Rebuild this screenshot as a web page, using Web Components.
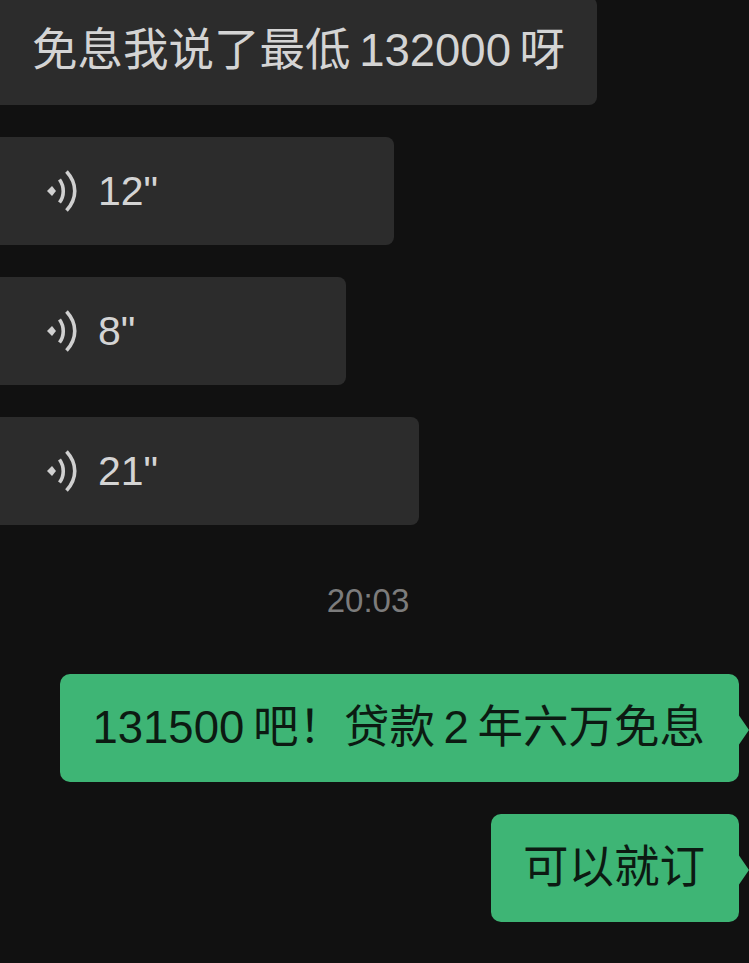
<!DOCTYPE html>
<html lang="zh">
<head>
<meta charset="utf-8">
<title>chat</title>
<style>
  html, body { margin: 0; height: 100%; overflow: hidden; background: #111111; }
  body { font-family: "Liberation Sans", "Noto Sans CJK SC", sans-serif; }
</style>
</head>
<body>
<chat-log>
  <chat-bubble style="margin-top:-3px">免息我说了最低 132000 呀</chat-bubble>
  <voice-bubble seconds="12" width="394"></voice-bubble>
  <voice-bubble seconds="8" width="346"></voice-bubble>
  <voice-bubble seconds="21" width="419"></voice-bubble>
  <chat-time>20:03</chat-time>
  <chat-bubble mine>131500 吧！贷款 2 年六万免息</chat-bubble>
  <chat-bubble mine>可以就订</chat-bubble>
</chat-log>
<script>
  class ChatLog extends HTMLElement {
    constructor() {
      super();
      this.attachShadow({ mode: 'open' }).innerHTML = `
        <style>
          :host { display: flex; flex-direction: column; align-items: flex-start; gap: 32px; }
        </style>
        <slot></slot>`;
    }
  }

  class ChatBubble extends HTMLElement {
    constructor() {
      super();
      this.attachShadow({ mode: 'open' }).innerHTML = `
        <style>
          :host {
            display: block; position: relative; box-sizing: border-box;
            height: 108px; padding: 0 32px; border-radius: 0 8px 8px 0;
            background: #2c2c2c; color: #d4d4d4;
            font-size: 45.5px; line-height: 108px; white-space: nowrap; word-spacing: -4px;
          }
          :host([mine]) {
            align-self: flex-end; margin-right: 10px; padding: 0 34px 0 32px;
            border-radius: 10px; background: #3eb575; color: #0c1a12;
          }
          .tail { display: none; }
          :host([mine]) .tail {
            display: block; position: absolute; right: -10px; top: 40px;
            width: 11px; height: 32px; background: #3eb575;
            clip-path: polygon(0 0, 100% 50%, 0 100%);
          }
        </style>
        <slot></slot><span class="tail"></span>`;
    }
  }

  class VoiceBubble extends HTMLElement {
    constructor() {
      super();
      const root = this.attachShadow({ mode: 'open' });
      root.innerHTML = `
        <style>
          :host {
            display: flex; align-items: center; gap: 20px; box-sizing: border-box;
            height: 108px; padding-left: 47px; border-radius: 0 8px 8px 0;
            background: #2c2c2c; color: #d4d4d4; font-size: 41px;
          }
          svg { flex: none; display: block; }
        </style>
        <svg width="31" height="44" viewBox="0 0 31 44" fill="none">
          <path d="M0 22l5-5 4 5-4 5z" fill="#d0d0d0"/>
          <path d="M12.5 10.5c5 7 5 16.500 0 23" stroke="#d0d0d0" stroke-width="3.6"/>
          <path d="M19.500 2.500c11 12 11 27 0 39" stroke="#d0d0d0" stroke-width="3.6"/>
        </svg>
        <span id="len"></span>`;
      root.getElementById('len').textContent = this.getAttribute('seconds') + '"';
      this.style.width = this.getAttribute('width') + 'px';
    }
  }

  class ChatTime extends HTMLElement {
    constructor() {
      super();
      this.attachShadow({ mode: 'open' }).innerHTML = `
        <style>
          :host {
            display: block; align-self: stretch; box-sizing: border-box;
            height: 85px; padding: 24px 13px 0 0; text-align: center;
            color: #7c7c7c; font-size: 33px; line-height: 40px;
          }
        </style>
        <slot></slot>`;
    }
  }

  customElements.define('chat-log', ChatLog);
  customElements.define('chat-bubble', ChatBubble);
  customElements.define('voice-bubble', VoiceBubble);
  customElements.define('chat-time', ChatTime);
</script>
</body>
</html>
